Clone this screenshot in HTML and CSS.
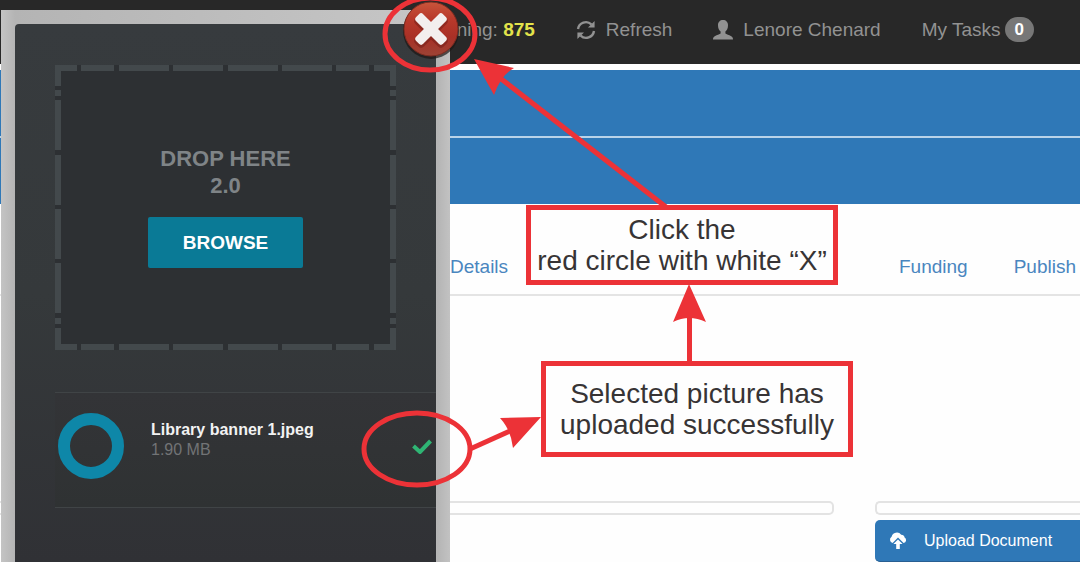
FILE: index.html
```html
<!DOCTYPE html>
<html lang="en">
<head>
    <meta charset="UTF-8">
    <meta name="viewport" content="width=device-width, initial-scale=1.0">
    <title>Upload Document</title>
    <link rel="stylesheet" href="styles.css">
</head>
<body>
    <nav class="navbar">
        <span class="remaining">Remaining: <strong>875</strong></span>
        <a class="nav-link" href="#">
            <svg class="icon" viewBox="0 0 20 20" aria-hidden="true">
                <path d="M2 9A8 8 0 0 1 15.4 4.4M18 11A8 8 0 0 1 4.6 15.6" fill="none" stroke="currentColor" stroke-width="2.4"/>
                <path d="M18.6 1V7.6H12ZM1.4 19V12.4H8Z" fill="currentColor"/>
            </svg>
            Refresh
        </a>
        <a class="nav-link" href="#">
            <svg class="icon" viewBox="0 0 20 20" aria-hidden="true">
                <path d="M10 0C13 0 15 2 15 5.2C15 8.4 13.8 10.4 12.4 11.6V13.6C14.6 14.9 18.6 16 19.4 17.2C20 18 20 19 20 19.4H0C0 19 0 18 0.6 17.2C1.4 16 5.4 14.9 7.6 13.6V11.6C6.2 10.4 5 8.4 5 5.2C5 2 7 0 10 0Z" fill="currentColor"/>
            </svg>
            Lenore Chenard
        </a>
        <a class="nav-link tasks" href="#">My Tasks <span class="badge">0</span></a>
    </nav>

    <header class="banner">
        <div class="banner-row"></div>
        <div class="banner-row"></div>
    </header>

    <nav class="tabs">
        <a class="first-tab" href="#">Details</a>
        <a href="#">Funding</a>
        <a href="#">Publish</a>
    </nav>

    <main class="content">
        <div class="well"></div>
        <div class="side">
            <div class="well side-well"></div>
            <button class="upload-button" type="button">
                <svg class="cloud" viewBox="0 0 18 17" aria-hidden="true">
                    <path d="M3.6 11A3.4 3.4 0 0 1 2.6 4.8A5.4 5.4 0 0 1 12.2 2.8A3.4 3.4 0 0 1 15.6 5.6A2.9 2.9 0 0 1 14.6 11L9 5.4Z" fill="currentColor"/>
                    <path d="M9 7.4L13.6 12H10.8V17H7.2V12H4.4Z" fill="currentColor"/>
                </svg>
                Upload Document
            </button>
        </div>
    </main>

    <section class="dialog" role="dialog" aria-label="Upload">
        <div class="panel">
            <div class="drop-zone">
                <svg class="dashes" viewBox="0 0 341 285" aria-hidden="true">
                    <path d="M22 3H3V21M319 3H338V21M22 282H3V263M319 282H338V263"/>
                    <path d="M26 3H59M64 3H114M118 3H168M173 3H223M227 3H277M281 3H314"/>
                    <path d="M26 282H59M64 282H114M118 282H168M173 282H223M227 282H277M281 282H314"/>
                    <path d="M3 25V31M3 35V85M3 90V140M3 144V194M3 198V248M3 253V259"/>
                    <path d="M338 25V31M338 35V85M338 90V140M338 144V194M338 198V248M338 253V259"/>
                </svg>
                <p class="drop-text">Drop Here<br>2.0</p>
                <button class="browse" type="button">Browse</button>
            </div>
            <ul class="files">
                <li class="file">
                    <svg class="ring" viewBox="0 0 66 66" aria-hidden="true">
                        <circle cx="33" cy="33" r="27"/>
                    </svg>
                    <div class="file-info">
                        <strong class="file-name">Library banner 1.jpeg</strong>
                        <span class="file-size">1.90 MB</span>
                    </div>
                    <svg class="check" viewBox="0 0 20 16" aria-hidden="true">
                        <path d="M1.5 8L8 14L18.5 3"/>
                    </svg>
                </li>
            </ul>
        </div>
        <button class="close" type="button" aria-label="Close">
            <svg viewBox="0 0 56 58" aria-hidden="true">
                <defs>
                    <linearGradient id="ball" x1="0" y1="0" x2="0" y2="1">
                        <stop offset="0" stop-color="#c8553b"/>
                        <stop offset="0.3" stop-color="#b93a2b"/>
                        <stop offset="0.65" stop-color="#a93026"/>
                        <stop offset="1" stop-color="#9c4335"/>
                    </linearGradient>
                </defs>
                <circle cx="28" cy="30" r="28" fill="#1c1715" opacity="0.7"/>
                <circle cx="28" cy="28" r="27" fill="url(#ball)" stroke="#7e2b20"/>
                <g fill="#6f1d17" opacity="0.5">
                    <rect x="8" y="24" width="40" height="12" rx="4" transform="rotate(45 28 30)"/>
                    <rect x="8" y="24" width="40" height="12" rx="4" transform="rotate(-45 28 30)"/>
                </g>
                <g fill="#f3efee">
                    <rect x="9" y="23" width="38" height="10" rx="3" transform="rotate(45 28 28)"/>
                    <rect x="9" y="23" width="38" height="10" rx="3" transform="rotate(-45 28 28)"/>
                </g>
            </svg>
        </button>
    </section>

    <!-- instructions drawn over the page -->
    <div class="notes">
        <svg class="arrows" viewBox="0 0 1080 562" aria-hidden="true">
            <g class="lines">
                <ellipse cx="430" cy="34" rx="45" ry="36"/>
                <ellipse cx="417" cy="449" rx="53" ry="36"/>
                <path d="M666 207L500 78"/>
                <path d="M689.5 363V315"/>
                <path d="M470 449L512 430"/>
            </g>
            <g class="heads">
                <path d="M474 59L514 68Q501 75 494 95Z"/>
                <path d="M689 284L706 322Q689 314 673 322Z"/>
                <path d="M541 417L513 448Q511 430 500 418Z"/>
            </g>
        </svg>
        <p class="note note-close">Click the<br>red circle with white “X”</p>
        <p class="note note-done">Selected picture has<br>uploaded successfully</p>
    </div>
</body>
</html>
```
FILE: styles.css
```css
* {
    box-sizing: border-box;
}

body {
    position: relative;
    margin: 0;
    min-height: 100vh;
    overflow: hidden;
    background: #fefefe;
    font-family: "Liberation Sans", Arial, sans-serif;
    font-size: 19px;
}

a {
    text-decoration: none;
}

p {
    margin: 0;
}

button {
    border: none;
    font-family: inherit;
    cursor: pointer;
}

.navbar {
    display: flex;
    justify-content: flex-end;
    align-items: center;
    gap: 41px;
    height: 64px;
    padding: 0 46px 5px 0;
    background: #282828;
    color: #929292;
    white-space: nowrap;
}

.remaining strong {
    color: #e3e34b;
}

.nav-link {
    display: flex;
    align-items: center;
    gap: 10px;
    color: #929292;
}

.tasks {
    gap: 4px;
}

.icon {
    width: 20px;
    height: 20px;
}

.badge {
    padding: 0 10px;
    border-radius: 13px;
    background: #777;
    color: #fff;
    font-size: 17px;
    font-weight: bold;
    line-height: 25px;
}

.banner {
    display: grid;
    gap: 2px;
    margin-top: 6px;
    background: #b9d3e9;
}

.banner-row {
    height: 66px;
    background: #2f78b7;
}

.tabs {
    display: flex;
    gap: 46px;
    padding: 51px 4px 15px 450px;
    border-bottom: 2px solid #e4e4e4;
    line-height: 24px;
}

.tabs a {
    color: #4a86bf;
}

.first-tab {
    margin-right: auto;
}

.content {
    display: grid;
    grid-template-columns: 1fr 205px;
    gap: 41px;
    padding-top: 205px;
}

.well {
    height: 14px;
    border: 2px solid #e3e3e3;
    border-left: none;
    border-radius: 0 5px 5px 0;
}

.side-well {
    border-left: 2px solid #e3e3e3;
    border-right: none;
    border-radius: 5px 0 0 5px;
}

.upload-button {
    display: flex;
    align-items: center;
    gap: 17px;
    width: 100%;
    height: 42px;
    margin-top: 5px;
    padding: 0 14px;
    border-bottom: 1px solid #285f92;
    border-radius: 5px 0 0 5px;
    background: #2f78b7;
    color: #fff;
    font-size: 16px;
    white-space: nowrap;
}

.cloud {
    width: 18px;
    height: 17px;
}

/* upload dialog, floats above the page */
.dialog {
    position: absolute;
    top: 10px;
    bottom: 0;
    left: 1px;
    width: 449px;
    padding: 14px 14px 0;
    background: linear-gradient(90deg, #c4c4c4, #b4b4b4 14px, #c6c6c6 430px, #b4b4b4 436px, #c2c2c2);
}

.panel {
    height: 100%;
    padding: 41px 0 0 40px;
    border-radius: 4px 4px 0 0;
    background: linear-gradient(#373b3e, #35393b 50%, #303135);
}

.drop-zone {
    position: relative;
    display: flex;
    flex-direction: column;
    align-items: center;
    gap: 18px;
    width: 341px;
    height: 285px;
    padding-top: 80px;
    border-radius: 4px;
    background: #2d3033;
}

.dashes {
    position: absolute;
    top: 0;
    left: 0;
    width: 100%;
    height: 100%;
    fill: none;
    stroke: #43494c;
    stroke-width: 6;
}

.drop-text {
    color: #7f8487;
    font-size: 22px;
    font-weight: bold;
    line-height: 27px;
    text-align: center;
    text-transform: uppercase;
}

.browse {
    padding: 0 35px;
    border-radius: 2px;
    background: #0a7a96;
    color: #fff;
    font-size: 19px;
    font-weight: bold;
    line-height: 51px;
    text-transform: uppercase;
}

.files {
    margin: 42px 0 0;
    padding: 0;
    list-style: none;
}

.file {
    display: flex;
    gap: 27px;
    padding: 20px 4px 28px 3px;
    border-top: 1px solid #404446;
    border-bottom: 1px solid #404446;
    background: linear-gradient(#333437, #2f3233);
}

.ring {
    width: 66px;
    height: 66px;
    fill: none;
    stroke: #0e87a8;
    stroke-width: 12;
}

.file-info {
    display: flex;
    flex: 1;
    flex-direction: column;
    padding-top: 7px;
    font-size: 16px;
    line-height: 20px;
}

.file-name {
    color: #f2f2f2;
}

.file-size {
    color: #727476;
}

.check {
    align-self: center;
    width: 20px;
    height: 16px;
    fill: none;
    stroke: #2fb574;
    stroke-width: 4;
}

.close {
    position: absolute;
    top: -9px;
    right: -9px;
    width: 56px;
    height: 58px;
    padding: 0;
    background: none;
}

.close svg {
    display: block;
}

/* notes with red frames and arrows */
.notes {
    position: absolute;
    top: 0;
    left: 0;
    pointer-events: none;
}

.arrows {
    display: block;
    width: 1080px;
    height: 562px;
}

.lines {
    fill: none;
    stroke: #ec3237;
    stroke-width: 5;
}

.heads {
    fill: #ec3237;
}

.note {
    position: absolute;
    display: grid;
    place-content: center;
    width: 312px;
    border: 5px solid #ec3237;
    background: #fefefe;
    color: #373435;
    font-size: 28px;
    line-height: 31px;
    text-align: center;
    white-space: nowrap;
}

.note-close {
    top: 205px;
    left: 526px;
    height: 80px;
}

.note-done {
    top: 361px;
    left: 541px;
    height: 96px;
}
```
